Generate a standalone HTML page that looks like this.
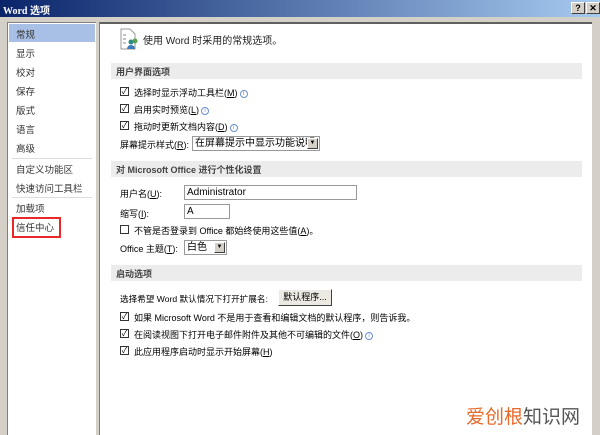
<!DOCTYPE html>
<html><head><meta charset="utf-8"><style>
*{margin:0;padding:0;box-sizing:border-box}
body{width:600px;height:435px;overflow:hidden;background:#d4d0c8;font-family:"Liberation Sans","Noto Sans CJK SC",sans-serif;font-size:9px;color:#000;position:relative}
.a{position:absolute;white-space:nowrap}
.title{left:0;top:0;width:600px;height:17px;background:linear-gradient(90deg,#0a246a,#a6caf0);color:#fff;font-weight:bold;font-size:10px;padding:2px 3px;font-family:"Liberation Serif","Noto Sans CJK SC",serif}
.tb{top:2px;width:14px;height:12px;background:#d4d0c8;border:1px solid;border-color:#fff #404040 #404040 #fff;font-size:9px;font-weight:bold;text-align:center;line-height:10px;color:#000}
.left{left:7px;top:22px;width:89px;height:413px;background:#fff;border-left:1px solid #808080;border-top:1px solid #808080}
.li{left:16px;font-size:9.5px;color:#333}
.right{left:99px;top:22px;width:493px;height:413px;background:#fff;border-left:1px solid #808080;border-top:2px solid #606060}
.sec{left:111px;width:471px;height:16px;background:#ececec;color:#444;font-weight:bold;padding:2px 5px;font-size:9px}
.cb{width:9px;height:9px;border:1px solid #333;background:#fff;font-size:8px;line-height:7px;text-align:center}
.in{background:#fff;border:1px solid #999;padding:0 2px;font-size:10px;line-height:13px;overflow:hidden}
.i{display:inline-block;width:8px;height:8px;border:1px solid #6a8fd0;border-radius:50%;font-size:6px;line-height:6px;text-align:center;color:#6a8fd0;vertical-align:1px;margin-left:2px}
.dd{width:11px;height:11px;background:#d4d0c8;border:1px solid;border-color:#fff #404040 #404040 #fff;font-size:6px;text-align:center;line-height:9px}
</style></head><body>
<div class="a title">Word 选项</div>
<div class="a tb" style="left:571px">?</div>
<div class="a tb" style="left:586px">✕</div>
<div class="a left"></div>
<div class="a" style="left:9px;top:24px;width:86px;height:18px;background:#a9c0e6"></div>
<div class="a li" style="top:27px">常规</div>
<div class="a li" style="top:46px">显示</div>
<div class="a li" style="top:65px">校对</div>
<div class="a li" style="top:84px">保存</div>
<div class="a li" style="top:103px">版式</div>
<div class="a li" style="top:122px">语言</div>
<div class="a li" style="top:141px">高级</div>
<div class="a" style="left:12px;top:158px;width:80px;height:1px;background:#ddd"></div>
<div class="a li" style="top:162px">自定义功能区</div>
<div class="a li" style="top:181px">快速访问工具栏</div>
<div class="a" style="left:12px;top:197px;width:80px;height:1px;background:#ddd"></div>
<div class="a li" style="top:201px">加载项</div>
<div class="a li" style="top:220px">信任中心</div>
<div class="a" style="left:12px;top:217px;width:49px;height:21px;border:2px solid #e8282a"></div>
<div class="a right"></div>
<svg class="a" style="left:119px;top:28px" width="20" height="22"><path d="M2 1h9l5 5v15H2z" fill="#fff" stroke="#999"/><path d="M4 7h3M4 11h3M4 15h3" stroke="#888"/><circle cx="12" cy="14" r="2.5" fill="#2a8a8a"/><circle cx="16" cy="13" r="2.5" fill="#5aa050"/><path d="M8 21a4 4 0 0 1 8 0z" fill="#3a7ab8"/></svg>
<div class="a" style="left:143px;top:32px;font-size:10px;color:#222">使用 Word 时采用的常规选项。</div>
<div class="a sec" style="top:63px">用户界面选项</div>
<div class="a cb" style="left:120px;top:87px">✓</div><div class="a" style="left:134px;top:86px">选择时显示浮动工具栏(<u>M</u>)<span class="i">i</span></div>
<div class="a cb" style="left:120px;top:104px">✓</div><div class="a" style="left:134px;top:103px">启用实时预览(<u>L</u>)<span class="i">i</span></div>
<div class="a cb" style="left:120px;top:121px">✓</div><div class="a" style="left:134px;top:120px">拖动时更新文档内容(<u>D</u>)<span class="i">i</span></div>
<div class="a" style="left:120px;top:138px">屏幕提示样式(<u>R</u>):</div>
<div class="a in" style="left:192px;top:136px;width:128px;height:15px">在屏幕提示中显示功能说明</div>
<div class="a dd" style="left:307px;top:138px">▼</div>
<div class="a sec" style="top:161px">对 Microsoft Office 进行个性化设置</div>
<div class="a" style="left:120px;top:187px">用户名(<u>U</u>):</div>
<div class="a in" style="left:184px;top:185px;width:173px;height:15px">Administrator</div>
<div class="a" style="left:120px;top:207px">缩写(<u>I</u>):</div>
<div class="a in" style="left:184px;top:204px;width:46px;height:15px">A</div>
<div class="a cb" style="left:120px;top:225px"></div><div class="a" style="left:134px;top:224px">不管是否登录到 Office 都始终使用这些值(<u>A</u>)。</div>
<div class="a" style="left:120px;top:242px">Office 主题(<u>T</u>):</div>
<div class="a in" style="left:184px;top:240px;width:43px;height:15px">白色</div>
<div class="a dd" style="left:214px;top:242px">▼</div>
<div class="a sec" style="top:265px">启动选项</div>
<div class="a" style="left:120px;top:293px;font-size:8.6px">选择希望 Word 默认情况下打开扩展名:</div>
<div class="a" style="left:278px;top:289px;width:54px;height:17px;background:#ece9e2;border:1px solid;border-color:#fff #404040 #404040 #fff;text-align:center;line-height:15px">默认程序...</div>
<div class="a cb" style="left:120px;top:312px">✓</div><div class="a" style="left:134px;top:311px">如果 Microsoft Word 不是用于查看和编辑文档的默认程序，则告诉我。</div>
<div class="a cb" style="left:120px;top:329px">✓</div><div class="a" style="left:134px;top:328px">在阅读视图下打开电子邮件附件及其他不可编辑的文件(<u>O</u>)<span class="i">i</span></div>
<div class="a cb" style="left:120px;top:346px">✓</div><div class="a" style="left:134px;top:345px">此应用程序启动时显示开始屏幕(<u>H</u>)</div>
<div class="a" style="left:466px;top:402px;font-size:19px;color:#e8692a">爱创根<span style="color:#555">知识网</span></div>
</body></html>
